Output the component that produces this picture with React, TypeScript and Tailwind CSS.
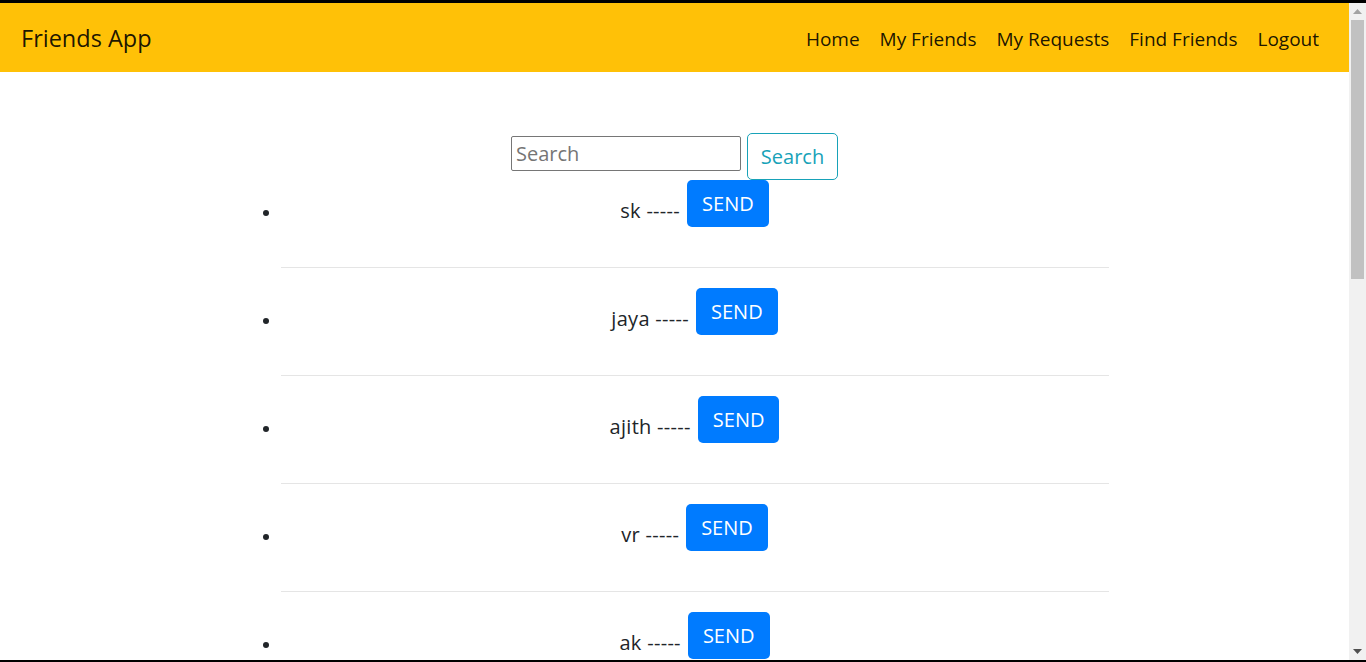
import React from 'react';

const links = ['Home', 'My Friends', 'My Requests', 'Find Friends', 'Logout'];
const people = ['sk', 'jaya', 'ajith', 'vr', 'ak'];

const Navbar: React.FC = () => (
  <nav className="h-[69px] shrink-0 bg-[#ffc107] flex items-center justify-between pl-[21px] pr-5 pt-[2px]">
    <a className="text-[23.5px] leading-[37px] text-black/90">Friends App</a>
    <ul className="flex items-center">
      {links.map((l) => (
        <li key={l}>
          <a className="block px-[10px] text-[19px] leading-[30px] text-black/90">{l}</a>
        </li>
      ))}
    </ul>
  </nav>
);

const Scrollbar: React.FC = () => (
  <div className="w-[17px] shrink-0 bg-[#f1f1f1] flex flex-col">
    <div className="h-[17px] flex items-center justify-center">
      <svg width="9" height="5" viewBox="0 0 9 5">
        <polygon points="4.5,0 9,5 0,5" fill="#a3a3a3" />
      </svg>
    </div>
    <div className="mx-[2px] h-[259px] bg-[#c1c1c1]"></div>
    <div className="flex-1"></div>
    <div className="h-[17px] flex items-center justify-center">
      <svg width="9" height="5" viewBox="0 0 9 5">
        <polygon points="0,0 9,0 4.5,5" fill="#505050" />
      </svg>
    </div>
  </div>
);

const App: React.FC = () => {
  return (
    <div className="h-[662px] flex flex-col bg-black pt-[3px] pb-[2px] overflow-hidden font-['Open_Sans',sans-serif] text-[#212529]">
      <div className="flex flex-1 min-h-0">
        <div className="flex-1 bg-white overflow-hidden flex flex-col">
          <Navbar />
          <div className="pt-[61px]">
            <form className="flex justify-center gap-[6px]" onSubmit={(e) => e.preventDefault()}>
              <input
                placeholder="Search"
                className="mt-[3px] w-[230px] h-[35px] border border-[#767676] rounded-[2px] px-[4px] text-[20px] placeholder:text-[#757575] outline-none"
              />
              <button className="w-[91px] h-[47px] border border-[#17a2b8] rounded-[5px] text-[20px] text-[#17a2b8] bg-white pt-[1px]">
                Search
              </button>
            </form>
            <ul className="w-[868px] mx-auto pl-10 list-disc">
              {people.map((p) => (
                <li key={p} className="text-center">
                  <div className="flex justify-center items-end gap-[5px] pb-5">
                    <span className="text-[20px] leading-[30px] mb-[1px] tracking-[0.3px] mr-[2px]">{p} -----</span>
                    <button className="h-[47px] px-[15px] rounded-[5px] bg-[#007bff] text-white text-[20px] leading-[30px] pt-[1px]">
                      SEND
                    </button>
                  </div>
                  <hr className="my-5 border-black/10" />
                </li>
              ))}
            </ul>
          </div>
        </div>
        <Scrollbar />
      </div>
    </div>
  );
};

export default App;
